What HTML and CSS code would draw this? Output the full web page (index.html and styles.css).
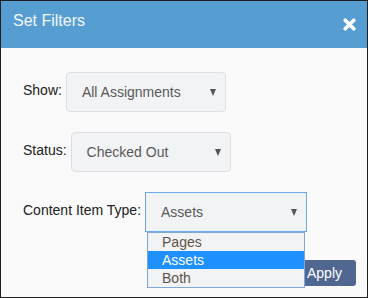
FILE: index.html
```html
<!DOCTYPE html>
<html>
<head>
<meta charset="utf-8">
<link rel="stylesheet" href="styles.css">
</head>
<body>
<div class="dialog">
  <header class="dlg-head">
    <h1 class="dlg-title">Set Filters</h1>
    <button class="close" aria-label="Close">
      <svg width="13" height="13" viewBox="0 0 13 13"><path d="M2.2 2.2 L10.8 10.8 M10.8 2.2 L2.2 10.8" stroke="#fff" stroke-width="3.6" stroke-linecap="round" fill="none"/></svg>
    </button>
  </header>
  <div class="dlg-body">
    <div class="row">
      <label class="lbl">Show:</label>
      <div class="select"><span>All Assignments</span><span class="caret"></span></div>
    </div>
    <div class="row">
      <label class="lbl">Status:</label>
      <div class="select"><span>Checked Out</span><span class="caret"></span></div>
    </div>
    <div class="row">
      <label class="lbl">Content Item Type:</label>
      <div class="select-wrap">
        <div class="select select-open"><span>Assets</span><span class="caret"></span></div>
        <ul class="options">
          <li>Pages</li>
          <li class="sel">Assets</li>
          <li>Both</li>
        </ul>
      </div>
    </div>
  </div>
  <div class="dlg-foot">
    <button class="apply">Apply</button>
  </div>
</div>
</body>
</html>
```
FILE: styles.css
```css
html, body {
  margin: 0;
  padding: 0;
  background: #fff;
}
.dialog {
  width: 368px;
  height: 298px;
  box-sizing: border-box;
  border: 1px solid #1e1e1e;
  background: #fafafa;
  font-family: "Liberation Sans", Arial, sans-serif;
  display: flex;
  flex-direction: column;
}
.dlg-head {
  height: 47px;
  background: #569ed2;
  display: flex;
  justify-content: space-between;
  align-items: flex-start;
  padding: 0 11px 0 12px;
  flex-shrink: 0;
}
.dlg-title {
  margin: 11px 0 0 0;
  font-size: 16px;
  line-height: 18px;
  font-weight: normal;
  color: #f4f7fa;
}
.close {
  margin-top: 17px;
  padding: 0;
  border: 0;
  background: none;
  width: 13px;
  height: 13px;
  display: block;
}
.close svg { display: block; }
.dlg-body {
  padding: 24px 0 0 22px;
  display: flex;
  flex-direction: column;
  gap: 20px;
}
.row {
  display: flex;
  align-items: center;
}
.lbl {
  font-size: 14px;
  color: #222;
  margin-right: 4px;
  margin-bottom: 5px;
}
.select {
  width: 160px;
  height: 40px;
  box-sizing: border-box;
  border: 1px solid #dcdfe4;
  border-radius: 4px;
  background: #f2f3f5;
  padding: 0 9px 0 15px;
  display: flex;
  align-items: center;
  justify-content: space-between;
  font-size: 14px;
  color: #595959;
}
.caret {
  width: 0;
  height: 0;
  border-left: 3.5px solid transparent;
  border-right: 3.5px solid transparent;
  border-top: 7px solid #555;
  margin-top: 1px;
}
.select-wrap {
  position: relative;
}
.select-open {
  width: 162px;
  border-color: #6aa8e6;
  border-radius: 0;
}
.options {
  position: absolute;
  top: 100%;
  left: 2px;
  width: 158px;
  box-sizing: border-box;
  margin: 0;
  padding: 0;
  list-style: none;
  border: 1px solid #7fa8da;
  background: #f2f3f5;
  z-index: 2;
}
.options li {
  height: 18px;
  line-height: 18px;
  padding-left: 14px;
  font-size: 14px;
  color: #5e5248;
}
.options li.sel {
  background: #1e90ff;
  color: #fff;
}
.dlg-foot {
  display: flex;
  justify-content: flex-end;
  padding: 28px 11px 0 0;
}
.apply {
  height: 26px;
  padding: 0 14px;
  border: 0;
  border-radius: 3px;
  background: #506890;
  color: #fff;
  font-family: "Liberation Sans", Arial, sans-serif;
  font-size: 14px;
}
```
